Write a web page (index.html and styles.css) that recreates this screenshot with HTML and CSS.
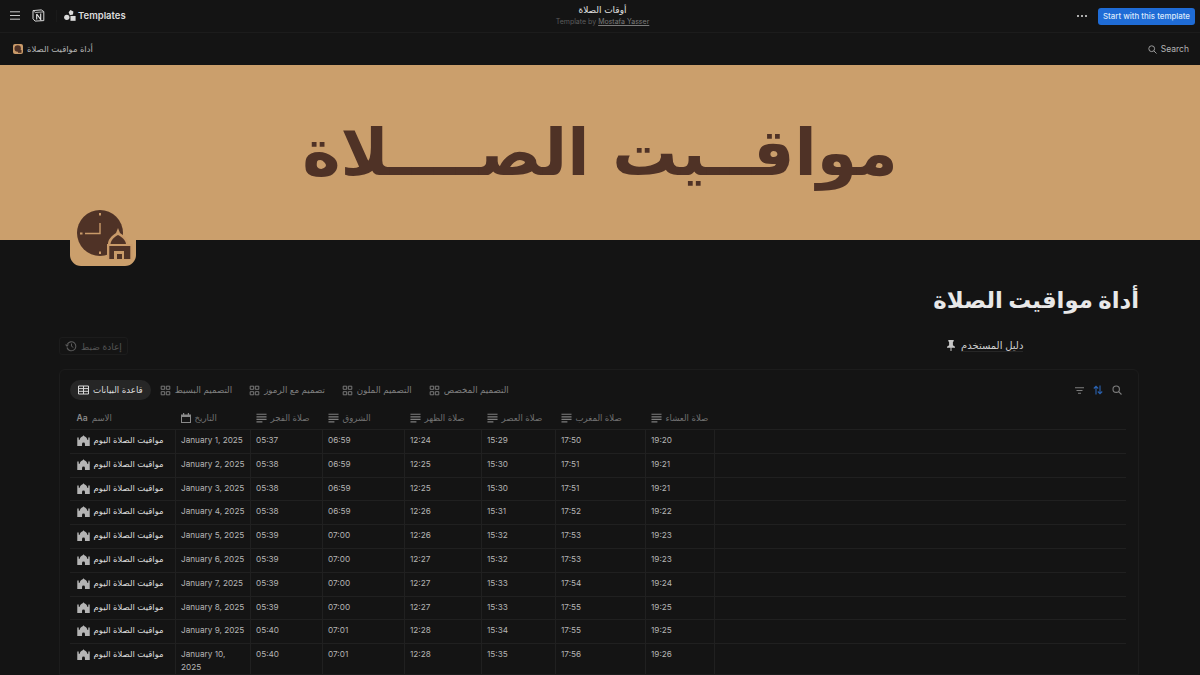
FILE: index.html
```html
<!DOCTYPE html>
<html>
<head>
  <meta name="viewport" content="width=device-width, initial-scale=1.0">
  <title>أوقات الصلاة</title>
  <link rel="stylesheet" href="styles.css">
</head>

<body>
  <svg class="sprites" width="0" height="0">
    <symbol id="lines" viewBox="0 0 12 12">
      <path d="M.5 1.800h11v1.300H.5zM.5 4.600h11v1.300H.5zM.5 7.400h11v1.300H.5zM.5 10.200h6.500v1.200H.5z" fill="currentColor"/>
    </symbol>
    <symbol id="grid" viewBox="0 0 12 12">
      <path d="M1.300 1.300h3.800v3.400H1.300zM6.900 1.300h3.800v3.400H6.900zM1.300 7.300h3.800v3.400H1.300zM6.900 7.300h3.800v3.400H6.900z" fill="none" stroke="currentColor" stroke-width="1"/>
    </symbol>
    <symbol id="mosque" viewBox="0 0 14 12">
      <path d="M7 0l.5 1.200C9.600 2 11 3.400 11 5.200h1.200V3.600l.8-1.600.8 1.600V12H8.600V9.800a1.600 1.600 0 0 0-3.200 0V12H.2V3.600L1 2l.8 1.600v1.600H3C3 3.400 4.400 2 6.500 1.200z" fill="currentColor"/>
    </symbol>
  </svg>

  <header class="topbar">
    <div class="topbar-left">
      <svg class="ico-menu" width="10" height="9" viewBox="0 0 10 9"><path d="M0 .8h10M0 4.500h10M0 8.200h10" stroke="#c9c9c9" stroke-width="1"/></svg>
      <svg class="ico-notion" width="13" height="13" viewBox="0 0 13 13">
        <path d="M1 1.600L9.300.900l2.500 1.700v9l-8.700.5L1 9.800z" fill="#161616" stroke="#d8d8d8" stroke-width="1"/>
        <path d="M1.300 1.700l2 1.800 8.200-.6" fill="none" stroke="#d8d8d8" stroke-width=".8"/>
        <path d="M4.700 5v5.500M4.700 5l4 5.500V4.600" fill="none" stroke="#e8e8e8" stroke-width="1.100"/>
      </svg>
      <span class="topbar-sep"></span>
      <svg class="ico-templates" width="12" height="11" viewBox="0 0 13 12">
        <path d="M7 0l3.200 1.600L9.800 5 6.400 5.600 5 2.500z" fill="#dcdcdc"/>
        <circle cx="3" cy="8" r="2.900" fill="#dcdcdc"/>
        <path d="M7 6.500h5.600V11.800H7z" fill="#dcdcdc"/>
      </svg>
      <span class="brand">Templates</span>
    </div>
    <div class="topbar-center">
      <div class="page-name">أوقات الصلاة</div>
      <div class="byline">Template by <span class="byline-name">Mostafa Yasser</span></div>
    </div>
    <div class="topbar-right">
      <span class="dots"><i></i><i></i><i></i></span>
      <button class="start-btn" type="button">Start with this template</button>
    </div>
  </header>

  <nav class="crumbs">
    <div class="crumb">
      <svg width="10" height="10" viewBox="0 0 10 10"><rect width="10" height="10" rx="2" fill="#c99a69"/><circle cx="4.700" cy="4.500" r="3.200" fill="#4f3226"/><path d="M5 6h3.500v2.800H5z" fill="#4f3226"/></svg>
      <span>أداة مواقيت الصلاة</span>
    </div>
    <div class="crumb-search">
      <svg width="9" height="9" viewBox="0 0 9 9"><circle cx="3.700" cy="3.700" r="2.900" fill="none" stroke="#9a9a9a"/><path d="M5.800 5.800L8.500 8.500" stroke="#9a9a9a"/></svg>
      <span>Search</span>
    </div>
  </nav>

  <div class="banner">
    <span class="banner-title" dir="rtl">مواقــيت الصــــلاة</span>
  </div>

  <main class="page">
    <div class="page-icon">
      <svg width="66" height="66" viewBox="0 0 66 66">
        <circle cx="30" cy="33" r="23" fill="#4f3226"/>
        <path d="M30 23V33.500H15" fill="none" stroke="#c99a69" stroke-width="1.400"/>
        <rect x="29" y="13" width="2" height="2.500" fill="#c99a69"/>
        <rect x="29" y="51.500" width="2" height="2.500" fill="#c99a69"/>
        <rect x="10" y="32.500" width="2.500" height="2" fill="#c99a69"/>
        <path d="M48 28l2 5c5 3 8 7 8 11h4.500v16H37V44h1c0-4 3-8 8-11z" fill="#c99a69"/>
        <path d="M48 35c4 2 7.500 5 8 9H40.500c.5-4 3.500-7 7.500-9z" fill="#4f3226"/>
        <path d="M39.300 46h21v13h-6.300v-8H44v8h-4.700z" fill="#4f3226"/>
        <path d="M47 54h5v5h-5z" fill="#4f3226"/>
      </svg>
    </div>

    <h1 class="title" dir="rtl">أداة مواقيت الصلاة</h1>

    <div class="actions">
      <button class="reset-btn" type="button">
        <svg width="12" height="12" viewBox="0 0 12 12"><path d="M2.300 4.300A4.500 4.500 0 1 1 2 7.500" fill="none" stroke="#5a5a5a" stroke-width="1.100"/><path d="M0 4.500h4L2 7z" fill="#5a5a5a"/><path d="M6.500 3.500V6.300L8.300 7.400" fill="none" stroke="#5a5a5a"/></svg>
        <span>إعادة ضبط</span>
      </button>
      <div class="guide">
        <svg width="10" height="11" viewBox="0 0 10 11"><path d="M2.300 0h5.400v1.300L6.900 2v3.200L9 6.700v1.100H5.500V11h-1V7.800H1V6.700l2.100-1.500V2l-.8-.7z" fill="#c8c8c8"/></svg>
        <span class="guide-text">دليل المستخدم</span>
      </div>
    </div>

    <section class="db">
      <div class="db-toolbar">
        <div class="tabs">
          <div class="tab tab-active">
            <svg width="11" height="10" viewBox="0 0 11 10"><path d="M.5 1h10v8H.5zM.5 3.600h10M.5 6.300h10M5.500 1v8" fill="none" stroke="#d8d8d8"/></svg>
            <span>قاعدة البيانات</span>
          </div>
          <div class="tab"><svg width="11" height="11"><use href="#grid"/></svg><span>التصميم البسيط</span></div>
          <div class="tab"><svg width="11" height="11"><use href="#grid"/></svg><span>تصميم مع الرموز</span></div>
          <div class="tab"><svg width="11" height="11"><use href="#grid"/></svg><span>التصميم الملون</span></div>
          <div class="tab"><svg width="11" height="11"><use href="#grid"/></svg><span>التصميم المخصص</span></div>
        </div>
        <div class="tools">
          <svg width="9" height="7" viewBox="0 0 9 7"><path d="M0 .8h9M1.500 3.500h6M3 6.200h3" stroke="#7d7d7d" stroke-width="1.100"/></svg>
          <svg width="10" height="10" viewBox="0 0 10 10"><path d="M3 9.500V1.500M.8 3.500L3 1.200l2.200 2.300M7 .5v8M4.800 6.500L7 8.800l2.200-2.300" fill="none" stroke="#2a62b0" stroke-width="1.100"/></svg>
          <svg width="10" height="10" viewBox="0 0 10 10"><circle cx="4.200" cy="4.200" r="3.200" fill="none" stroke="#7d7d7d" stroke-width="1.100"/><path d="M6.600 6.600L9.500 9.500" stroke="#7d7d7d" stroke-width="1.100"/></svg>
        </div>
      </div>

      <table class="grid-table">
        <colgroup>
          <col class="c-name"><col class="c-date"><col class="c-fajr"><col class="c-shuruq"><col class="c-dhuhr"><col class="c-asr"><col class="c-maghrib"><col class="c-isha"><col>
        </colgroup>
        <thead>
          <tr>
            <th><span class="th-in th-first"><span class="aa">Aa</span><span>الاسم</span></span></th>
            <th><span class="th-in"><svg class="th-ico" width="10" height="10" viewBox="0 0 10 10"><path d="M0 1.500h10V10H0z" fill="#8a8a8a"/><path d="M1 4h8v5H1z" fill="#161616"/><path d="M2 0h1.200v2H2zM6.800 0H8v2H6.800z" fill="#8a8a8a"/></svg><span>التاريخ</span></span></th>
            <th><span class="th-in"><svg class="th-ico" width="11" height="11"><use href="#lines"/></svg><span>صلاة الفجر</span></span></th>
            <th><span class="th-in"><svg class="th-ico" width="11" height="11"><use href="#lines"/></svg><span>الشروق</span></span></th>
            <th><span class="th-in"><svg class="th-ico" width="11" height="11"><use href="#lines"/></svg><span>صلاة الظهر</span></span></th>
            <th><span class="th-in"><svg class="th-ico" width="11" height="11"><use href="#lines"/></svg><span>صلاة العصر</span></span></th>
            <th><span class="th-in"><svg class="th-ico" width="11" height="11"><use href="#lines"/></svg><span>صلاة المغرب</span></span></th>
            <th><span class="th-in"><svg class="th-ico" width="11" height="11"><use href="#lines"/></svg><span>صلاة العشاء</span></span></th>
            <th></th>
          </tr>
        </thead>
        <tbody>
          <tr><td><span class="name"><svg width="13" height="11"><use href="#mosque"/></svg><span>مواقيت الصلاة اليوم</span></span></td><td class="date">January 1, 2025</td><td>05:37</td><td>06:59</td><td>12:24</td><td>15:29</td><td>17:50</td><td>19:20</td><td></td></tr>
          <tr><td><span class="name"><svg width="13" height="11"><use href="#mosque"/></svg><span>مواقيت الصلاة اليوم</span></span></td><td class="date">January 2, 2025</td><td>05:38</td><td>06:59</td><td>12:25</td><td>15:30</td><td>17:51</td><td>19:21</td><td></td></tr>
          <tr><td><span class="name"><svg width="13" height="11"><use href="#mosque"/></svg><span>مواقيت الصلاة اليوم</span></span></td><td class="date">January 3, 2025</td><td>05:38</td><td>06:59</td><td>12:25</td><td>15:30</td><td>17:51</td><td>19:21</td><td></td></tr>
          <tr><td><span class="name"><svg width="13" height="11"><use href="#mosque"/></svg><span>مواقيت الصلاة اليوم</span></span></td><td class="date">January 4, 2025</td><td>05:38</td><td>06:59</td><td>12:26</td><td>15:31</td><td>17:52</td><td>19:22</td><td></td></tr>
          <tr><td><span class="name"><svg width="13" height="11"><use href="#mosque"/></svg><span>مواقيت الصلاة اليوم</span></span></td><td class="date">January 5, 2025</td><td>05:39</td><td>07:00</td><td>12:26</td><td>15:32</td><td>17:53</td><td>19:23</td><td></td></tr>
          <tr><td><span class="name"><svg width="13" height="11"><use href="#mosque"/></svg><span>مواقيت الصلاة اليوم</span></span></td><td class="date">January 6, 2025</td><td>05:39</td><td>07:00</td><td>12:27</td><td>15:32</td><td>17:53</td><td>19:23</td><td></td></tr>
          <tr><td><span class="name"><svg width="13" height="11"><use href="#mosque"/></svg><span>مواقيت الصلاة اليوم</span></span></td><td class="date">January 7, 2025</td><td>05:39</td><td>07:00</td><td>12:27</td><td>15:33</td><td>17:54</td><td>19:24</td><td></td></tr>
          <tr><td><span class="name"><svg width="13" height="11"><use href="#mosque"/></svg><span>مواقيت الصلاة اليوم</span></span></td><td class="date">January 8, 2025</td><td>05:39</td><td>07:00</td><td>12:27</td><td>15:33</td><td>17:55</td><td>19:25</td><td></td></tr>
          <tr><td><span class="name"><svg width="13" height="11"><use href="#mosque"/></svg><span>مواقيت الصلاة اليوم</span></span></td><td class="date">January 9, 2025</td><td>05:40</td><td>07:01</td><td>12:28</td><td>15:34</td><td>17:55</td><td>19:25</td><td></td></tr>
          <tr><td><span class="name"><svg width="13" height="11"><use href="#mosque"/></svg><span>مواقيت الصلاة اليوم</span></span></td><td class="date">January 10, 2025</td><td>05:40</td><td>07:01</td><td>12:28</td><td>15:35</td><td>17:56</td><td>19:26</td><td></td></tr>
        </tbody>
      </table>
    </section>
  </main>
</body>
</html>
```

FILE: styles.css
```css
html, body {
  margin: 0;
  padding: 0;
  height: 675px;
  overflow: hidden;
}

body {
  font-family: Inter, "Noto Sans", "DejaVu Sans", sans-serif;
  font-size: 8.5px;
  background-color: #141414;
  color: #d4d4d4;
}

.sprites {
  position: absolute;
}

/* top bars */
.topbar {
  height: 32px;
  display: grid;
  grid-template-columns: 1fr auto 1fr;
  align-items: center;
  padding: 0 5px 0 10px;
  border-bottom: 1px solid #1c1c1c;
}

.topbar-left {
  display: flex;
  align-items: center;
  margin-top: -1px;
}

.ico-notion {
  margin-left: 12px;
}

.topbar-sep {
  width: 1px;
  height: 12px;
  margin: 0 7px 0 11px;
  background-color: #1a1a1a;
}

.brand {
  margin-left: 2px;
  font-size: 9.5px;
  font-weight: 600;
  color: #dcdcdc;
}

.topbar-center {
  text-align: center;
  margin-top: -1px;
}

.page-name {
  font-size: 9px;
  line-height: 12px;
  color: #e0e0e0;
}

.byline {
  font-size: 7px;
  line-height: 11px;
  color: #5c5c5c;
}

.byline-name {
  color: #7a7a7a;
  text-decoration: underline;
}

.topbar-right {
  display: flex;
  align-items: center;
  justify-content: flex-end;
}

.dots {
  display: flex;
  gap: 2px;
  margin-right: 11px;
}

.dots i {
  width: 2px;
  height: 2px;
  border-radius: 50%;
  background-color: #e0e0e0;
}

.start-btn {
  height: 17px;
  padding: 0 5px;
  border: none;
  border-radius: 3px;
  background-color: #1f6cd6;
  color: #dbe9fb;
  font-family: Inter, sans-serif;
  font-size: 7.9px;
  font-weight: 500;
}

.crumbs {
  height: 32px;
  display: flex;
  align-items: center;
  justify-content: space-between;
  padding: 0 11px 0 13px;
}

.crumb,
.crumb-search {
  display: flex;
  align-items: center;
  gap: 4px;
  color: #b5b5b5;
  font-size: 8.5px;
}

/* banner */
.banner {
  height: 175px;
  background-color: #cb9f6c;
  display: flex;
  align-items: center;
  justify-content: center;
}

.banner-title {
  font-family: "DejaVu Sans", sans-serif;
  font-size: 65px;
  font-weight: 700;
  line-height: 100px;
  color: #4f3226;
}

/* page */
.page {
  padding: 0 61px 0 59px;
}

.page-icon {
  width: 66px;
  height: 66px;
  margin: -40px 0 0 11px;
  border-radius: 0 0 11px 11px;
  background-color: #cb9f6c;
}

.title {
  margin: 16px 0 0;
  font-size: 22.8px;
  line-height: 36px;
  font-weight: 700;
  color: #e8e8e8;
  text-align: right;
}

.actions {
  display: flex;
  align-items: center;
  margin-top: 19px;
}

.reset-btn {
  width: 69px;
  height: 18px;
  display: flex;
  align-items: center;
  gap: 4px;
  padding: 0 5px;
  background: none;
  border: 1px solid #1c1c1c;
  border-radius: 3px;
  color: #555;
  font-family: inherit;
  font-size: 9px;
}

.guide {
  display: flex;
  align-items: center;
  gap: 5px;
  margin: -1px 0 0 818px;
  color: #cfcfcf;
  font-size: 10px;
}

.guide-text {
  border-bottom: 1px solid #262626;
}

.db {
  margin-top: 14px;
  padding: 10px 12px 0 10px;
  border: 1px solid #1c1c1c;
  border-radius: 6px 6px 0 0;
}

.db-toolbar {
  display: flex;
  align-items: center;
  justify-content: space-between;
  height: 20px;
}

.tabs {
  display: flex;
  align-items: center;
  gap: 1px;
}

.tab {
  height: 20px;
  display: flex;
  align-items: center;
  gap: 4px;
  padding: 0 8px;
  border-radius: 10px;
  color: #7f7f7f;
  font-size: 8.7px;
}

.tab-active {
  background-color: #262626;
  color: #dedede;
}

.tools {
  display: flex;
  align-items: center;
  gap: 9px;
  padding-right: 4px;
}

/* table */
.grid-table {
  width: 1056px;
  margin-top: 6px;
  table-layout: fixed;
  border-collapse: collapse;
  font-size: 8.2px;
}

.c-name { width: 105px; }
.c-date { width: 75px; }
.c-fajr { width: 72px; }
.c-shuruq { width: 82px; }
.c-dhuhr { width: 77px; }
.c-asr { width: 74px; }
.c-maghrib { width: 90px; }
.c-isha { width: 69px; }

.grid-table th {
  height: 23px;
  padding: 0 5.5px;
  font-size: 8.6px;
  font-weight: 400;
  text-align: left;
  color: #727272;
  border-bottom: 1px solid #202020;
}

.th-in {
  display: flex;
  align-items: center;
  gap: 4px;
  white-space: nowrap;
}

.th-first {
  padding-left: 1px;
}

.th-ico {
  color: #7d7d7d;
}

.aa {
  font-weight: 600;
  color: #8a8a8a;
}

.grid-table td {
  height: 23.8px;
  padding: 4px 5.5px 0;
  line-height: 13px;
  color: #b4b4b4;
  border-top: 1px solid #202020;
  border-right: 1px solid #202020;
  vertical-align: top;
  box-sizing: border-box;
}

.grid-table td.date {
  padding-right: 4px;
}

.grid-table td:last-child {
  border-right: none;
}

.name {
  display: flex;
  align-items: center;
  gap: 4px;
  white-space: nowrap;
  color: #dcdcdc;
  padding-left: 1px;
  font-size: 8.5px;
}

.name svg {
  color: #b4b4b4;
}
```
